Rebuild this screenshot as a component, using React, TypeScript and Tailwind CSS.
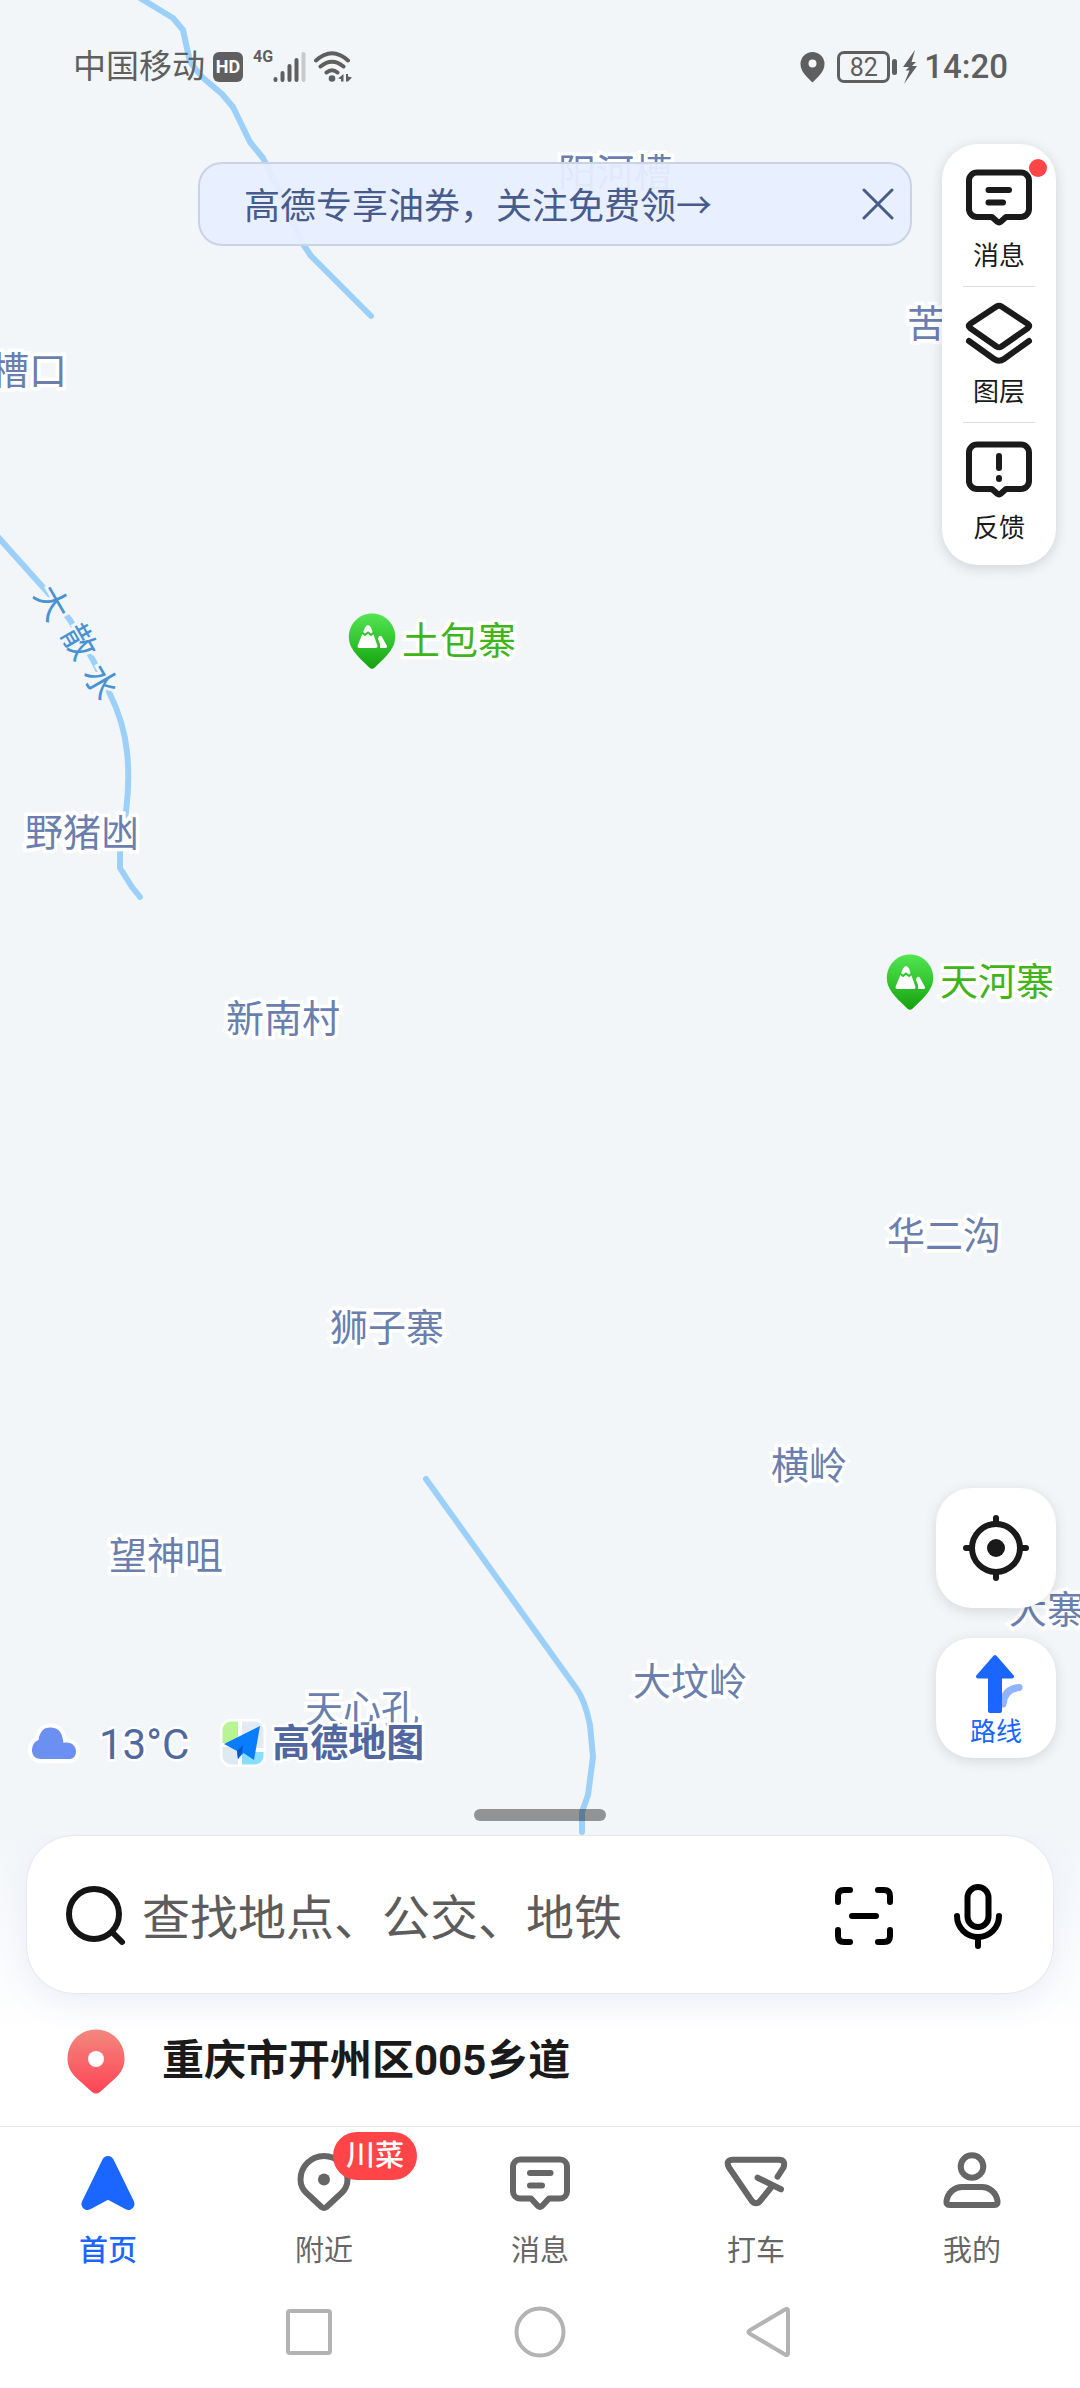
import { useState } from 'react'
import type { ReactNode } from 'react'

const rivers = [
  'M140 -2 L173 18 L183 30 L190 62 L202 77 L222 94 L233 107 L250 142 L263 158 L270 172 L303 244 L311 256 L371 316',
  'M-2 537 L50 595 L70 620 L93 660 L109 692 Q124 722 127 752 Q130 780 126 812 L120 853 L120 868 L132 887 L140 897',
  'M426 1479 L576 1688 Q585 1700 590 1725 L593 1757 L588 1795 L582 1812 L582 1832',
]

const places = [
  { name: '阳河槽', className: 'left-[558px] top-[150px]' },
  { name: '苦', className: 'left-[907px] top-[301px]' },
  { name: '槽口', className: 'left-[-9px] top-[348px]' },
  { name: '野猪凼', className: 'left-[25px] top-[810px]' },
  { name: '新南村', className: 'left-[226px] top-[996px]' },
  { name: '华二沟', className: 'left-[887px] top-[1213px]' },
  { name: '狮子寨', className: 'left-[330px] top-[1305px]' },
  { name: '横岭', className: 'left-[771px] top-[1443px]' },
  { name: '望神咀', className: 'left-[109px] top-[1533px]' },
  { name: '大寨', className: 'left-[1009px] top-[1587px]' },
  { name: '大坟岭', className: 'left-[633px] top-[1659px]' },
  { name: '天心孔', className: 'left-[305px] top-[1686px]' },
]

const peaks = [
  { name: '土包寨', className: 'left-[348px] top-[613px]' },
  { name: '天河寨', className: 'left-[886px] top-[954px]' },
]

const riverName = [
  { char: '大', className: 'left-[35px] top-[585px]' },
  { char: '散', className: 'left-[62px] top-[624px]' },
  { char: '水', className: 'left-[84px] top-[664px]' },
]

function Icon({ children, width = 6, className = '' }: { children: ReactNode; width?: number; className?: string }) {
  return (
    <svg
      viewBox="0 0 68 64"
      className={`h-16 w-[68px] overflow-visible ${className}`}
      fill="none"
      stroke="currentColor"
      strokeWidth={width}
      strokeLinecap="round"
      strokeLinejoin="round"
      aria-hidden="true"
    >
      {children}
    </svg>
  )
}

const bubble = 'M12 6.5h44a8 8 0 0 1 8 8V43a8 8 0 0 1-8 8H41l-5 4.5q-2 1.8-4 0L27 51H12a8 8 0 0 1-8-8V14.5a8 8 0 0 1 8-8Z'

function StatusBar() {
  return (
    <header className="flex h-[134px] items-center justify-between pl-[73px] pr-[72px] text-[#5f5f5f]">
      <div className="flex items-center">
        <span className="text-[33px] leading-10">中国移动</span>
        <span className="ml-2 flex h-[30px] w-[30px] items-center justify-center rounded-md bg-[#5f5f5f] text-[18px] font-bold leading-none text-white">
          HD
        </span>
        <span className="ml-[10px] self-start text-[16px] font-bold leading-5">4G</span>
        <svg viewBox="0 0 33 32" className="h-8 w-[33px]" aria-hidden="true">
          <g stroke="#5f5f5f" strokeWidth="4" strokeLinecap="round">
            <path d="M2.500 28v1M9.500 22v7M16.500 15v14M23.500 9v20" />
            <path d="M30.500 3v26" stroke="#c9c9c9" />
          </g>
        </svg>
        <svg viewBox="0 0 38 32" className="ml-2 h-8 w-[38px]" aria-hidden="true">
          <g fill="none" stroke="#5f5f5f" strokeWidth="4" strokeLinecap="round">
            <path d="M2 9.500Q18 -5 34 9.500M6.500 15.500Q18 6 29.500 15.500M12.500 21.500Q18 17 23.500 21.500" />
          </g>
          <circle cx="18" cy="27.500" r="3.300" fill="#5f5f5f" />
          <path d="M29.500 23v7.500H27V28l-3-.5ZM32 30.500V23h2v2.500l4 1-4 4Z" fill="#5f5f5f" />
        </svg>
      </div>
      <div className="flex items-center">
        <svg viewBox="0 0 25 32" className="h-8 w-[25px]" aria-hidden="true">
          <path
            d="M12.500 1A12 12 0 0 0 .5 13c0 8 7.500 14 12 18.500C17 27 24.500 21 24.500 13a12 12 0 0 0-12-12Zm0 7.500a4 4 0 1 1 0 8 4 4 0 0 1 0-8Z"
            fill="#5f5f5f"
          />
        </svg>
        <span className="ml-3 flex h-8 w-[53px] items-center justify-center rounded-[7px] border-3 border-[#5f5f5f] text-[25px] leading-none">
          82
        </span>
        <span className="ml-[2px] h-4 w-[5px] rounded-sm bg-[#5f5f5f]" />
        <svg viewBox="0 0 16 34" className="ml-[5px] h-[34px] w-4" aria-hidden="true">
          <path d="M13 0 1 17h6L3.500 20.500h4L2 34 15 16h-5l4-4H9.500Z" fill="#5f5f5f" />
        </svg>
        <span className="ml-[6px] text-[33px] font-medium leading-10">14:20</span>
      </div>
    </header>
  )
}

function PeakPin({ id }: { id: string }) {
  return (
    <svg viewBox="0 0 48 56" className="h-14 w-12" aria-hidden="true">
      <defs>
        <linearGradient id={id} x1="0" y1="0" x2="0" y2="1">
          <stop offset="0" stopColor="#54e552" />
          <stop offset=".55" stopColor="#2fc32d" />
          <stop offset="1" stopColor="#17a010" />
        </linearGradient>
      </defs>
      <path d="M24 .5C11 .5 .8 11 .8 24c0 10 6.500 17.500 20.500 30.500q2.700 2.500 5.400 0C40.700 41.500 47.200 34 47.200 24 47.200 11 37 .5 24 .5Z" fill={`url(#${id})`} />
      <path d="M9.500 33 17 14.500q3-5 6 0L29.500 33q.3 2-2 2H11.500q-2.300 0-2-2Z" fill="#fff" />
      <path d="M32 35c.5-3-.5-6-2-9l.5-2q2-2.500 3.500 0l5 9q.5 2-1.500 2Z" fill="#fff" />
      <path d="m14 19.500 3 2.500 3-2.500 3 2.500 3-2.500" fill="none" stroke="#2fc32d" strokeWidth="2" />
    </svg>
  )
}

function MapCanvas() {
  return (
    <div className="absolute inset-0 overflow-hidden whitespace-nowrap">
      <svg className="absolute left-0 top-0 h-full w-full" aria-hidden="true">
        {rivers.map((d) => (
          <path key={d} d={d} fill="none" stroke="#9dd0f9" strokeWidth="6" strokeLinecap="round" strokeLinejoin="round" />
        ))}
      </svg>
      {places.map((p) => (
        <span
          key={p.name}
          className={`absolute text-[38px] leading-[46px] text-[#6a7fae] [-webkit-text-stroke:7px_white] [paint-order:stroke] ${p.className}`}
        >
          {p.name}
        </span>
      ))}
      {riverName.map((r) => (
        <span
          key={r.char}
          className={`absolute w-[34px] rotate-60 text-center text-[34px] leading-9 text-[#4a93d3] [-webkit-text-stroke:6px_#f3f6f9] [paint-order:stroke] ${r.className}`}
        >
          {r.char}
        </span>
      ))}
      {peaks.map((p, i) => (
        <div key={p.name} className={`absolute flex items-center gap-[6px] ${p.className}`}>
          <PeakPin id={`peak-${i}`} />
          <span className="text-[38px] leading-[46px] text-[#3fb51b] [-webkit-text-stroke:7px_white] [paint-order:stroke]">
            {p.name}
          </span>
        </div>
      ))}
    </div>
  )
}

function Banner({ onClose }: { onClose: () => void }) {
  return (
    <div className="mt-[18px] flex h-[84px] flex-1 items-center justify-between rounded-3xl border-2 border-[#c9d3e8] bg-[#e7eefe]/95 pl-11 pr-4 text-[#475b8c]">
      <a href="#coupon" className="pt-[5px] text-[36px] leading-[44px]">
        高德专享油券，关注免费领→
      </a>
      <button type="button" onClick={onClose} aria-label="关闭">
        <svg viewBox="0 0 32 32" className="h-8 w-8" stroke="currentColor" strokeWidth="3" strokeLinecap="round" aria-hidden="true">
          <path d="M2 2l28 28M30 2 2 30" />
        </svg>
      </button>
    </div>
  )
}

function ToolButton({ label, last, children }: { label: string; last?: boolean; children: ReactNode }) {
  return (
    <button type="button" className="relative flex w-[72px] flex-col items-center pt-[15px] text-[#1a1a1a]">
      {children}
      <span className="mt-[10px] text-[26px] leading-8">{label}</span>
      <span className={last ? 'mt-[14px]' : 'mt-[14px] h-px w-full bg-[#dcdcdc]'} />
    </button>
  )
}

function ToolPanel() {
  return (
    <div className="flex w-[114px] flex-col items-center rounded-[36px] bg-white py-[7px] shadow-[0_3px_14px_rgba(0,0,0,0.14)]">
      <ToolButton label="消息">
        <Icon>
          <path d={bubble} />
          <path d="M23.500 24H44M23.500 36.500H38" />
        </Icon>
        <span className="absolute right-[-12px] top-2 h-[18px] w-[18px] rounded-full bg-[#ff4548]" />
      </ToolButton>
      <ToolButton label="图层">
        <Icon>
          <path d="M31.500 4.500q2.500-1.600 5 0L63 22q2.500 2 0 4L36.500 44.500q-2.500 1.600-5 0L5 26q-2.500-2 0-4Z" />
          <path d="M4 39l25 18q5 3.500 10 0l25-18" />
        </Icon>
      </ToolButton>
      <ToolButton label="反馈" last>
        <Icon>
          <path d={bubble} />
          <path d="M34 18v12M34 40v1" />
        </Icon>
      </ToolButton>
    </div>
  )
}

function Weather() {
  return (
    <div className="flex h-12 items-center text-[#50689f]">
      <svg viewBox="0 0 56 44" className="h-11 w-14" aria-hidden="true">
        <path
          d="M15 38C3 38 4 22 12.500 19 14 8 20 6 25.500 6.500 33 7 36.500 12 37.500 22 45 20 50 25 50 30.500c0 5-3 7.500-7 7.500Z"
          fill="#6b90f2"
          stroke="#fff"
          strokeWidth="8"
          strokeLinejoin="round"
          paintOrder="stroke"
        />
      </svg>
      <span className="ml-[17px] pt-1 text-[42px] leading-[48px] [-webkit-text-stroke:5px_white] [paint-order:stroke]">13°C</span>
      <svg viewBox="0 0 46 48" className="ml-[31px] h-12 w-[46px]" aria-hidden="true">
        <rect x="0" y="0" width="46" height="48" rx="11" fill="#fff" />
        <path d="M11 2.500h7V24H2.500V11a8.500 8.500 0 0 1 8.500-8.500Z" fill="#b8f394" />
        <path d="M22 2.500h13A8.500 8.500 0 0 1 43.500 11v18H22Z" fill="#e3eaf1" />
        <path d="M2.500 28H18v17.500h-7A8.500 8.500 0 0 1 2.500 37Z" fill="#dfeaf0" />
        <path d="M22 33h21.500v4a8.500 8.500 0 0 1-8.500 8.500H22Z" fill="#86dfff" />
        <path d="M40 7 34 41 23.500 34 18 40l-1-8L4 25Z" fill="#0a7dff" />
        <path d="M23 26 17 32l1 8 4-6Z" fill="#0a55c8" />
      </svg>
      <span className="ml-[6px] text-[38px] font-bold leading-[48px] [-webkit-text-stroke:5px_white] [paint-order:stroke]">高德地图</span>
    </div>
  )
}

function MapButtons() {
  return (
    <div className="mb-[9px] flex flex-col gap-[30px]">
      <button
        type="button"
        aria-label="定位"
        className="flex h-[120px] w-[120px] items-center justify-center rounded-[36px] bg-white text-[#1a1a1a] shadow-[0_3px_14px_rgba(0,0,0,0.12)]"
      >
        <Icon>
          <circle cx="34" cy="32" r="24" />
          <path d="M34 2v6M34 56v6M4 32h6M58 32h6" />
          <circle cx="34" cy="32" r="9" fill="currentColor" stroke="none" />
        </Icon>
      </button>
      <button
        type="button"
        className="flex h-[120px] w-[120px] flex-col items-center justify-center rounded-[36px] bg-white pt-1 text-[#1a66ff] shadow-[0_3px_14px_rgba(0,0,0,0.12)]"
      >
        <Icon width={4}>
          <path d="M41 52q1-15 16-16.500" stroke="#8fb3fc" strokeWidth="7" />
          <path d="M33 5 16 24.500h12V59h10V24.500h12Z" fill="currentColor" />
        </Icon>
        <span className="text-[26px] leading-8">路线</span>
      </button>
    </div>
  )
}

function SearchCard() {
  return (
    <form
      className="mx-[26px] flex items-center rounded-[48px] border border-[#e6e6f0] bg-white pb-[43px] pl-[35px] pr-[41px] pt-[46px] text-black shadow-[0_10px_30px_rgba(110,120,190,0.10)]"
      onSubmit={(e) => e.preventDefault()}
    >
      <label htmlFor="search" aria-label="搜索">
        <Icon className="text-[#141414]">
          <circle cx="32" cy="30" r="25" />
          <path d="m51 49 9 9" />
        </Icon>
      </label>
      <input
        id="search"
        type="search"
        placeholder="查找地点、公交、地铁"
        className="ml-3 h-[68px] min-w-0 flex-1 pt-1 text-[48px] leading-[64px] outline-none placeholder:text-[#5c5c5c]"
      />
      <button type="button" aria-label="扫一扫">
        <Icon>
          <path d="M8 18v-6q0-6 6-6h6M48 6h6q6 0 6 6v6M60 46v6q0 6-6 6h-6M20 58h-6q-6 0-6-6v-6M22 32h24" />
        </Icon>
      </button>
      <button type="button" aria-label="语音搜索" className="ml-[46px]">
        <Icon>
          <rect x="23.500" y="3" width="21" height="40" rx="10.500" />
          <path d="M13 32a21 21 0 0 0 42 0M34 53v9" />
        </Icon>
      </button>
    </form>
  )
}

function CurrentPlace() {
  return (
    <a href="#place" className="flex items-center gap-[37px] pb-8 pl-[67px] pt-[34px]">
      <svg viewBox="0 0 58 66" className="h-[66px] w-[58px]" aria-hidden="true">
        <defs>
          <linearGradient id="here" x1="0" y1="0" x2="0" y2="1">
            <stop offset="0" stopColor="#f2887f" />
            <stop offset="1" stopColor="#ff4456" />
          </linearGradient>
        </defs>
        <path d="M29 1.500C13 1.500 .5 14 .5 30.500c0 9 4 15 9.500 20L25 64q4 3 8 0l15-13.500c5.500-5 9.500-11 9.500-20C57.500 14 45 1.500 29 1.500Z" fill="url(#here)" />
        <circle cx="29" cy="31" r="8" fill="#fff" />
      </svg>
      <span className="text-[42px] font-bold leading-[50px] text-[#1a1a1a]">重庆市开州区005乡道</span>
    </a>
  )
}

const tabs = [
  {
    label: '首页',
    icon: (
      <path d="M34 12 13.500 54 34 43 54.500 54Z" fill="currentColor" strokeWidth="12" />
    ),
  },
  {
    label: '附近',
    badge: '川菜',
    icon: (
      <>
        <path d="M31.500 57 16.500 43C11 38 10.500 33 10.500 29.500a23.500 23.500 0 0 1 47 0C57.500 33 57 38 51.500 43l-15 14q-2.500 2-5 0Z" />
        <circle cx="34" cy="29.500" r="6" fill="currentColor" stroke="none" />
      </>
    ),
  },
  {
    label: '消息',
    icon: (
      <>
        <path d="M14 9.500h40a7 7 0 0 1 7 7v25a7 7 0 0 1-7 7H43L36 56q-2 1.800-4 0l-7-7.500H14a7 7 0 0 1-7-7v-25a7 7 0 0 1 7-7Z" />
        <path d="M24 23h20.500M24 35.500h12" />
      </>
    ),
  },
  {
    label: '打车',
    icon: (
      <>
        <path d="M55.600 26.700 61.500 17.500Q64 9.700 57 9.700H11Q3 10 7 17.500L29.500 50.500Q34 56 38.500 50.500L49.400 37" />
        <path d="M35.600 27.700 59 39.300" />
      </>
    ),
  },
  {
    label: '我的',
    icon: (
      <>
        <circle cx="34" cy="16.500" r="11.300" />
        <path d="M8.500 51C10 42 17 37 24 37h20c7 0 14 5 15.500 14q.5 4-3 4h-45q-3.500 0-3-4Z" />
      </>
    ),
  },
]

function TabBar() {
  const [active, setActive] = useState('首页')

  return (
    <nav className="grid grid-cols-5 border-t border-[#e8e8e8] bg-white">
      {tabs.map((tab) => (
        <button
          key={tab.label}
          type="button"
          onClick={() => setActive(tab.label)}
          className={`flex flex-col items-center pb-[7px] pt-[23px] ${active === tab.label ? 'text-[#1a66ff]' : 'text-[#666666]'}`}
        >
          <span className="relative">
            <Icon>{tab.icon}</Icon>
            {tab.badge && (
              <span className="absolute left-[43px] top-[-18px] flex h-12 w-[84px] items-center justify-center rounded-full bg-[#ff4548] text-[29px] font-medium leading-9 text-white">
                {tab.badge}
              </span>
            )}
          </span>
          <span className={`mt-[19px] text-[29px] leading-9 ${active === tab.label ? 'font-medium' : ''}`}>{tab.label}</span>
        </button>
      ))}
    </nav>
  )
}

function SystemNav() {
  return (
    <div className="flex h-[112px] items-center justify-center gap-[179px] bg-white text-[#b3b3b3]">
      <button type="button" aria-label="最近任务">
        <svg viewBox="0 0 52 52" className="h-[52px] w-[52px]" fill="none" stroke="currentColor" strokeWidth="4">
          <rect x="5" y="5" width="42" height="42" rx="2" />
        </svg>
      </button>
      <button type="button" aria-label="主屏幕">
        <svg viewBox="0 0 52 52" className="h-[52px] w-[52px]" fill="none" stroke="currentColor" strokeWidth="4">
          <circle cx="26" cy="26" r="23.500" />
        </svg>
      </button>
      <button type="button" aria-label="返回">
        <svg viewBox="0 0 52 52" className="h-[52px] w-[52px]" fill="none" stroke="currentColor" strokeWidth="4" strokeLinejoin="round">
          <path d="M4.500 24.500 40.500 3.200q2.500-1 2.500 1.500v42.600q0 2.500-2.500 1.500L4.500 27.500q-2-1.500 0-3Z" />
        </svg>
      </button>
    </div>
  )
}

export default function App() {
  const [bannerOpen, setBannerOpen] = useState(true)

  return (
    <main className="flex min-h-screen flex-col bg-white font-['Roboto','Noto_Sans_CJK_SC',sans-serif]">
      <section className="relative flex flex-1 flex-col bg-[#f3f6f9]">
        <MapCanvas />
        <div className="relative flex flex-1 flex-col">
          <StatusBar />
          <div className="mt-[10px] flex items-start justify-end gap-[30px] pl-[198px] pr-6">
            {bannerOpen && <Banner onClose={() => setBannerOpen(false)} />}
            <ToolPanel />
          </div>
          <div className="mt-auto flex items-end justify-between pl-[26px] pr-6">
            <Weather />
            <MapButtons />
          </div>
          <div className="mx-auto mb-[14px] mt-[42px] h-3 w-[132px] rounded-full bg-black/40" />
        </div>
      </section>
      <section className="bg-linear-to-b from-[#f3f6f9] to-white to-70%">
        <SearchCard />
        <CurrentPlace />
      </section>
      <TabBar />
      <SystemNav />
    </main>
  )
}
